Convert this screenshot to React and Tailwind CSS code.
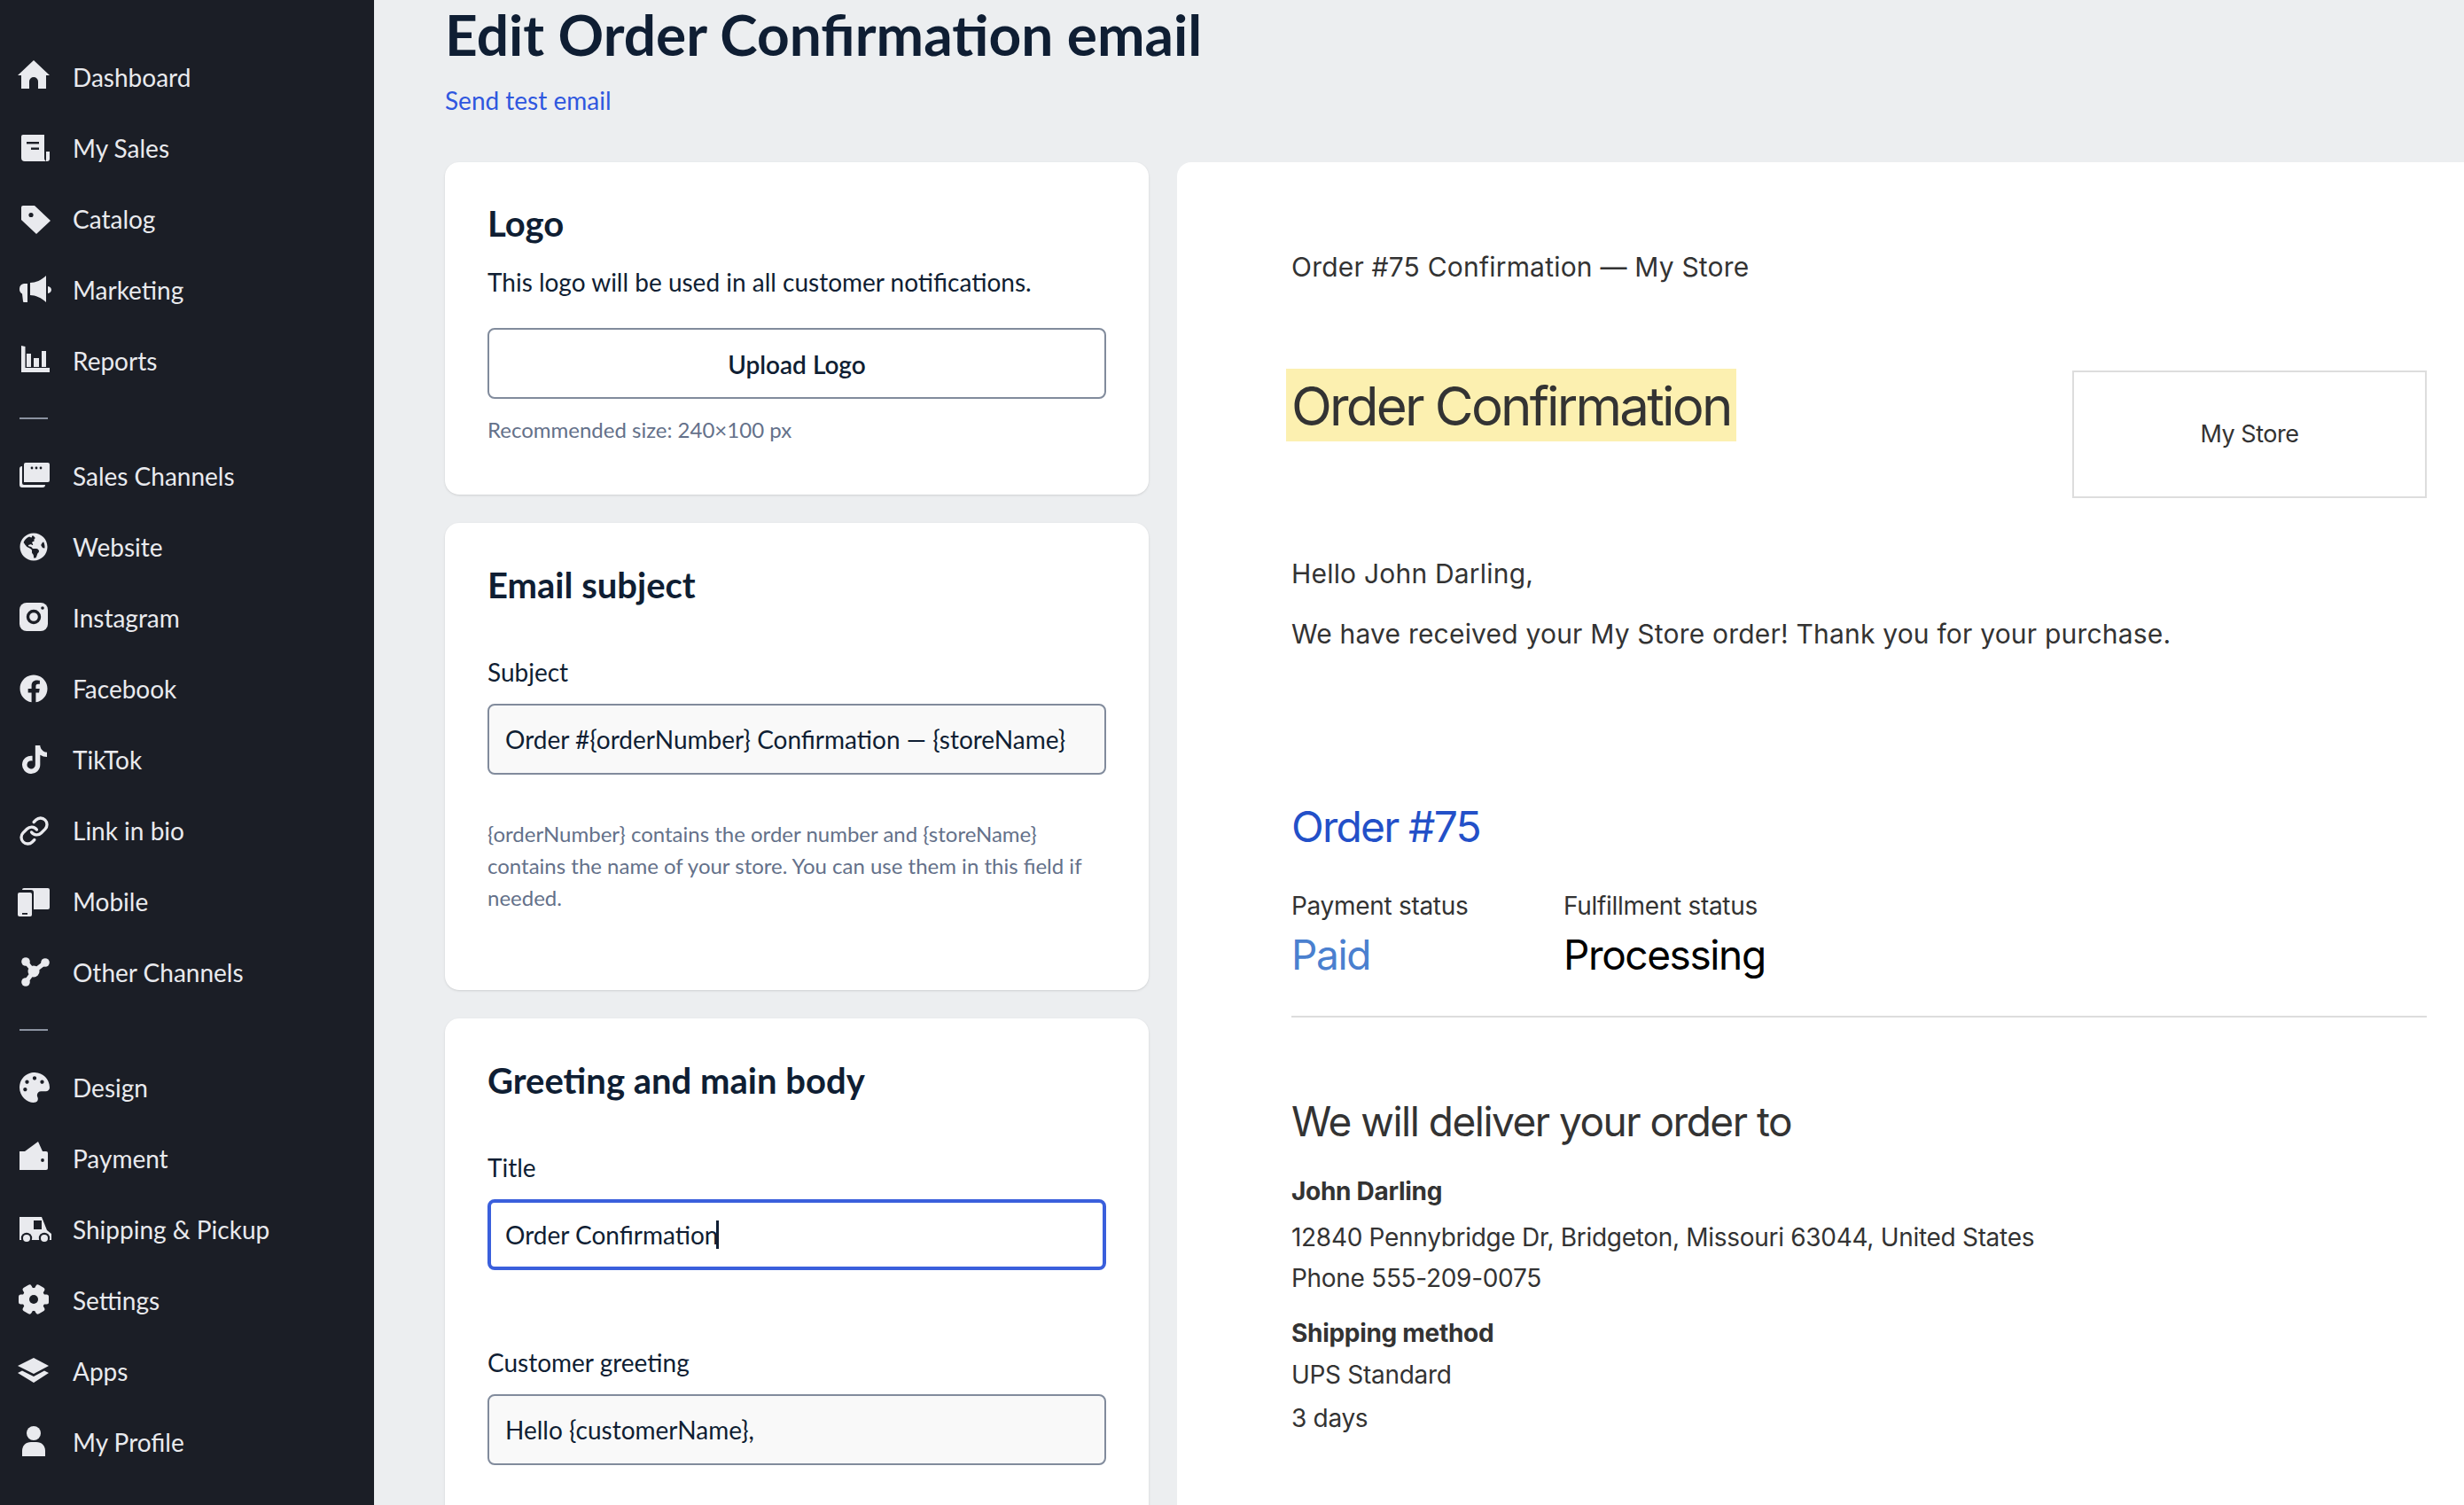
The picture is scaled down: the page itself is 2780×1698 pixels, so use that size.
import React from 'react';
import { FaGlobeAmericas, FaFacebook, FaTiktok, FaPalette } from 'react-icons/fa';
import { Link as LinkIcon } from 'lucide-react';

const ink = '#1b1e26';

// icons are drawn in a 38x38 box, coordinates taken from the sidebar
function Home() {
  return <path d="M18 0L36 17H32V32H23V24a5 5 0 0 0-10 0V32H4V17H0Z" />;
}
function Sales() {
  return (
    <>
      <path d="M6 4H30V31a4 4 0 0 0 2 3H8a4 4 0 0 1-4-4V6a2 2 0 0 1 2-2Z" />
      <path d="M32 23h4v8a3 3 0 0 1-3 3h-1z" />
      <rect x="10" y="12" width="14" height="2.4" fill={ink} />
      <rect x="15" y="18.500" width="9" height="2.4" fill={ink} />
    </>
  );
}
function Tag() {
  return (
    <>
      <path d="M6 4H19L37 21L21 36L4 20V6a2 2 0 0 1 2-2Z" />
      <circle cx="15" cy="14.500" r="2.600" fill={ink} />
    </>
  );
}
function Horn() {
  return (
    <>
      <path d="M11 12H7a6 6 0 0 0-5 6a6 6 0 0 0 3 5.500L6 32a1 1 0 0 0 1 1h4z" />
      <path d="M14 11C20 11 27 8 32 3V33C27 28 20 25 14 25Z" />
      <path d="M34 15a4.500 4.500 0 0 1 4 4a4.500 4.500 0 0 1-4 4z" />
    </>
  );
}
function Chart() {
  return (
    <>
      <path d="M4 2l4.500 1V27H36V32H4Z" />
      <rect x="10" y="11" width="5" height="15" />
      <rect x="18" y="16" width="6" height="10" />
      <rect x="27" y="8" width="5" height="18" />
    </>
  );
}
function Channels() {
  return (
    <>
      <path d="M9 4H34a2 2 0 0 1 2 2V24a2 2 0 0 1-2 2H7V6a2 2 0 0 1 2-2Z" />
      <path d="M2 11a3 3 0 0 1 3-3V27a2 2 0 0 0 2 2H31a3 3 0 0 1-3 3H5a3 3 0 0 1-3-3Z" />
      <circle cx="16" cy="10" r="1.400" fill={ink} />
      <circle cx="21" cy="10" r="1.400" fill={ink} />
      <circle cx="26" cy="10" r="1.400" fill={ink} />
    </>
  );
}
function Insta() {
  return (
    <>
      <rect x="2" y="2" width="32" height="32" rx="8" />
      <circle cx="18" cy="18" r="6.500" fill="none" stroke={ink} strokeWidth="3.400" />
      <circle cx="28" cy="8" r="1.800" fill={ink} />
    </>
  );
}
function Mobile() {
  return (
    <>
      <path d="M7 4H34a2 2 0 0 1 2 2V26a2 2 0 0 1-2 2H18V9a3 3 0 0 0-3-3H5a2 2 0 0 1 2-2Z" />
      <rect x="0" y="9" width="16" height="27" rx="2" />
      <rect x="5" y="32" width="6" height="1.800" fill={ink} />
    </>
  );
}
function Nodes() {
  return (
    <>
      <g stroke="#e9eaee" strokeWidth="5">
        <path d="M9 7L18 18M31 8L18 18M9 30L18 18" />
      </g>
      <circle cx="18" cy="18" r="6.500" />
      <circle cx="9" cy="7" r="4.800" />
      <circle cx="31" cy="8" r="4.800" />
      <circle cx="9" cy="30" r="4.800" />
    </>
  );
}
function Wallet() {
  return (
    <>
      <path d="M8 11L23 0L28 11Z" />
      <path d="M2 11H32a2 2 0 0 1 2 2V30a2 2 0 0 1-2 2H2Z" />
      <circle cx="28" cy="21" r="1.900" fill={ink} />
    </>
  );
}
function Truck() {
  return (
    <>
      <path d="M0 5H25L31 20L36 24V31H0Z" />
      <rect x="16" y="9" width="9" height="10" fill={ink} />
      <circle cx="8" cy="29" r="6.200" fill={ink} />
      <circle cx="28" cy="29" r="6.200" fill={ink} />
      <circle cx="8" cy="29" r="4" />
      <circle cx="28" cy="29" r="4" />
      <rect x="0" y="31" width="1.500" height="4" fill={ink} />
    </>
  );
}
function Gear() {
  return (
    <>
      {[0, 60, 120].map((a) => (
        <rect key={a} x="1" y="12.500" width="34" height="11" rx="2.500" transform={`rotate(${a} 18 18)`} />
      ))}
      <circle cx="18" cy="18" r="13" />
      <circle cx="18" cy="18" r="5" fill={ink} />
    </>
  );
}
function Layers() {
  return (
    <>
      <path d="M18 4L35 13L18 22L0 13Z" />
      <path d="M5 18.500L18 25L30 18.500L35 21L18 32L0 21Z" />
    </>
  );
}
function User() {
  return (
    <>
      <circle cx="18" cy="9" r="8" />
      <path d="M15 19H21C27 19 31 23 31 29V35H5V29C5 23 9 19 15 19Z" />
    </>
  );
}

function Svg({ children }) {
  return (
    <svg width="38" height="38" viewBox="0 0 38 38" fill="#e9eaee" className="overflow-visible">
      {children}
    </svg>
  );
}

const groupA = [
  ['Dashboard', <Svg><Home /></Svg>],
  ['My Sales', <Svg><Sales /></Svg>],
  ['Catalog', <Svg><Tag /></Svg>],
  ['Marketing', <Svg><Horn /></Svg>],
  ['Reports', <Svg><Chart /></Svg>],
];
const groupB = [
  ['Sales Channels', <Svg><Channels /></Svg>],
  ['Website', <FaGlobeAmericas size={32} className="ml-[2px]" />],
  ['Instagram', <Svg><Insta /></Svg>],
  ['Facebook', <FaFacebook size={32} className="ml-[2px]" />],
  ['TikTok', <FaTiktok size={32} className="ml-[3px]" />],
  ['Link in bio', <LinkIcon size={35} strokeWidth={2.3} className="ml-[1px]" />],
  ['Mobile', <Svg><Mobile /></Svg>],
  ['Other Channels', <Svg><Nodes /></Svg>],
];
const groupC = [
  ['Design', <FaPalette size={34} className="ml-[2px]" />],
  ['Payment', <Svg><Wallet /></Svg>],
  ['Shipping & Pickup', <Svg><g transform="translate(2,0)"><Truck /></g></Svg>],
  ['Settings', <Svg><Gear /></Svg>],
  ['Apps', <Svg><Layers /></Svg>],
  ['My Profile', <Svg><User /></Svg>],
];

function NavGroup({ items }) {
  return items.map(([label, icon]) => (
    <div key={label} className="flex items-center h-20 pl-5">
      <span className="w-[38px] h-[38px] flex items-center shrink-0 text-[#e9eaee]">{icon}</span>
      <span className="ml-[24px] text-[28px] text-[#e9eaee]">{label}</span>
    </div>
  ));
}

function Divider() {
  return (
    <div className="h-[50px] flex items-center pl-[22px]">
      <div className="w-8 h-[2px] bg-[#8b92a0]" />
    </div>
  );
}

function Field({ value }) {
  return (
    <input
      readOnly
      value={value}
      className="mt-4 block w-full h-20 px-[18px] rounded-lg border-2 border-[#818b9c] bg-[#f9f9f9] text-[28px] text-[#0f1e33] outline-none"
    />
  );
}

function Card({ className, children }) {
  return <section className={`bg-white rounded-2xl shadow-sm px-12 ${className}`}>{children}</section>;
}

function Heading({ children }) {
  return <h2 className="text-[40px] leading-[50px] font-bold text-[#0f1e33]">{children}</h2>;
}

function Label({ className, children }) {
  return <div className={`text-[28px] leading-10 text-[#0f1e33] ${className}`}>{children}</div>;
}

export default function App() {
  return (
    <div className="h-screen flex overflow-hidden bg-[#eceef0] font-[Lato,sans-serif]">
      <aside className="w-[422px] shrink-0 bg-[#1b1e26] pt-[47px]">
        <NavGroup items={groupA} />
        <Divider />
        <NavGroup items={groupB} />
        <Divider />
        <NavGroup items={groupC} />
      </aside>

      <main className="flex-1 min-w-0 pl-20">
        <h1 className="h-[78px] text-[64px] leading-[78px] font-bold text-[#0f1e33]">Edit Order Confirmation email</h1>
        <a className="block mt-[15px] text-[28px] leading-10 text-[#2f57df]">Send test email</a>

        <div className="mt-[50px] flex gap-8">
          <div className="w-[794px] shrink-0 flex flex-col gap-8">
            <Card className="pt-[44px] pb-[55px]">
              <Heading>Logo</Heading>
              <p className="mt-[21px] text-[28px] leading-10 text-[#0f1e33]">This logo will be used in all customer notifications.</p>
              <button className="mt-8 block w-full h-20 pt-[2px] rounded-lg border-2 border-[#818b9c] bg-white text-[28px] font-semibold text-[#0f1e33]">
                Upload Logo
              </button>
              <p className="mt-[17px] text-[24px] leading-9 text-[#64718a]">Recommended size: 240×100 px</p>
            </Card>

            <Card className="pt-[45px] pb-[86px]">
              <Heading>Email subject</Heading>
              <Label className="mt-[53px]">Subject</Label>
              <Field value="Order #{orderNumber} Confirmation — {storeName}" />
              <p className="mt-[49px] text-[24px] leading-9 text-[#64718a]">
                {'{orderNumber} contains the order number and {storeName} contains the name of your store. You can use them in this field if needed.'}
              </p>
            </Card>

            <Card className="pt-[45px] pb-[100px]">
              <Heading>Greeting and main body</Heading>
              <Label className="mt-[53px]">Title</Label>
              <div className="mt-4 flex items-center h-20 px-[18px] rounded-lg border-4 border-[#3a5fdc] bg-white text-[28px] text-[#0f1e33]">
                <span className="-ml-[2px]">Order Confirmation</span>
                <span className="inline-block w-[3px] h-[32px] -ml-[2px] bg-[#0f1e33]" />
              </div>
              <Label className="mt-[84px]">Customer greeting</Label>
              <Field value="Hello {customerName}," />
            </Card>
          </div>

          <div className="flex-1 min-w-0 bg-white rounded-tl-2xl pl-[129px] pr-[42px] pt-24 pb-24 font-[Inter,sans-serif] text-[#333333]">
            <div className="text-[30px] leading-[44px] tracking-[0.2px]">Order #75 Confirmation — My Store</div>

            <div className="mt-[93px] flex items-start">
              <div className="-ml-[6px] px-[6px] h-[82px] bg-[#fcf0b0] text-[60px] leading-[85px] tracking-[-2.8px]">Order Confirmation</div>
              <div className="ml-auto mt-[2px] w-[400px] h-[144px] border-2 border-[#dddddd] flex items-center justify-center text-[27px] tracking-[-0.5px]">
                My Store
              </div>
            </div>

            <div className="mt-[63px] text-[30px] leading-[44px] tracking-[0.2px]">Hello John Darling,</div>
            <div className="mt-6 text-[30px] leading-[44px] tracking-[0.2px]">We have received your My Store order! Thank you for your purchase.</div>

            <div className="mt-[166px] text-[48px] leading-[60px] tracking-[-1.8px] text-[#2350c8]">Order #75</div>

            <div className="mt-[39px] flex">
              <div className="w-[307px]">
                <div className="text-[28px] leading-10 tracking-[-0.3px]">Payment status</div>
                <div className="mt-[7px] text-[46px] leading-[56px] tracking-[-1.4px] text-[#4a80cf]">Paid</div>
              </div>
              <div>
                <div className="text-[28px] leading-10 tracking-[-0.3px]">Fulfillment status</div>
                <div className="mt-[7px] text-[46px] leading-[56px] tracking-[-1.4px] text-black">Processing</div>
              </div>
            </div>

            <hr className="mt-[41px] border-0 h-[2px] bg-[#dddddd]" />

            <div className="mt-[87px] text-[46px] leading-[60px] tracking-[-1.5px]">We will deliver your order to</div>
            <div className="mt-[29px] text-[28px] leading-10 font-bold tracking-[-0.3px]">John Darling</div>
            <div className="mt-[9px] text-[28px] leading-[46px] tracking-[-0.3px]">12840 Pennybridge Dr, Bridgeton, Missouri 63044, United States</div>
            <div className="text-[28px] leading-[46px] tracking-[-0.3px]">Phone 555-209-0075</div>
            <div className="mt-[19px] text-[28px] leading-10 font-bold tracking-[-0.3px]">Shipping method</div>
            <div className="mt-1 text-[28px] leading-[46px] tracking-[-0.3px]">UPS Standard</div>
            <div className="mt-[3px] text-[28px] leading-[46px] tracking-[-0.3px]">3 days</div>
          </div>
        </div>
      </main>
    </div>
  );
}
